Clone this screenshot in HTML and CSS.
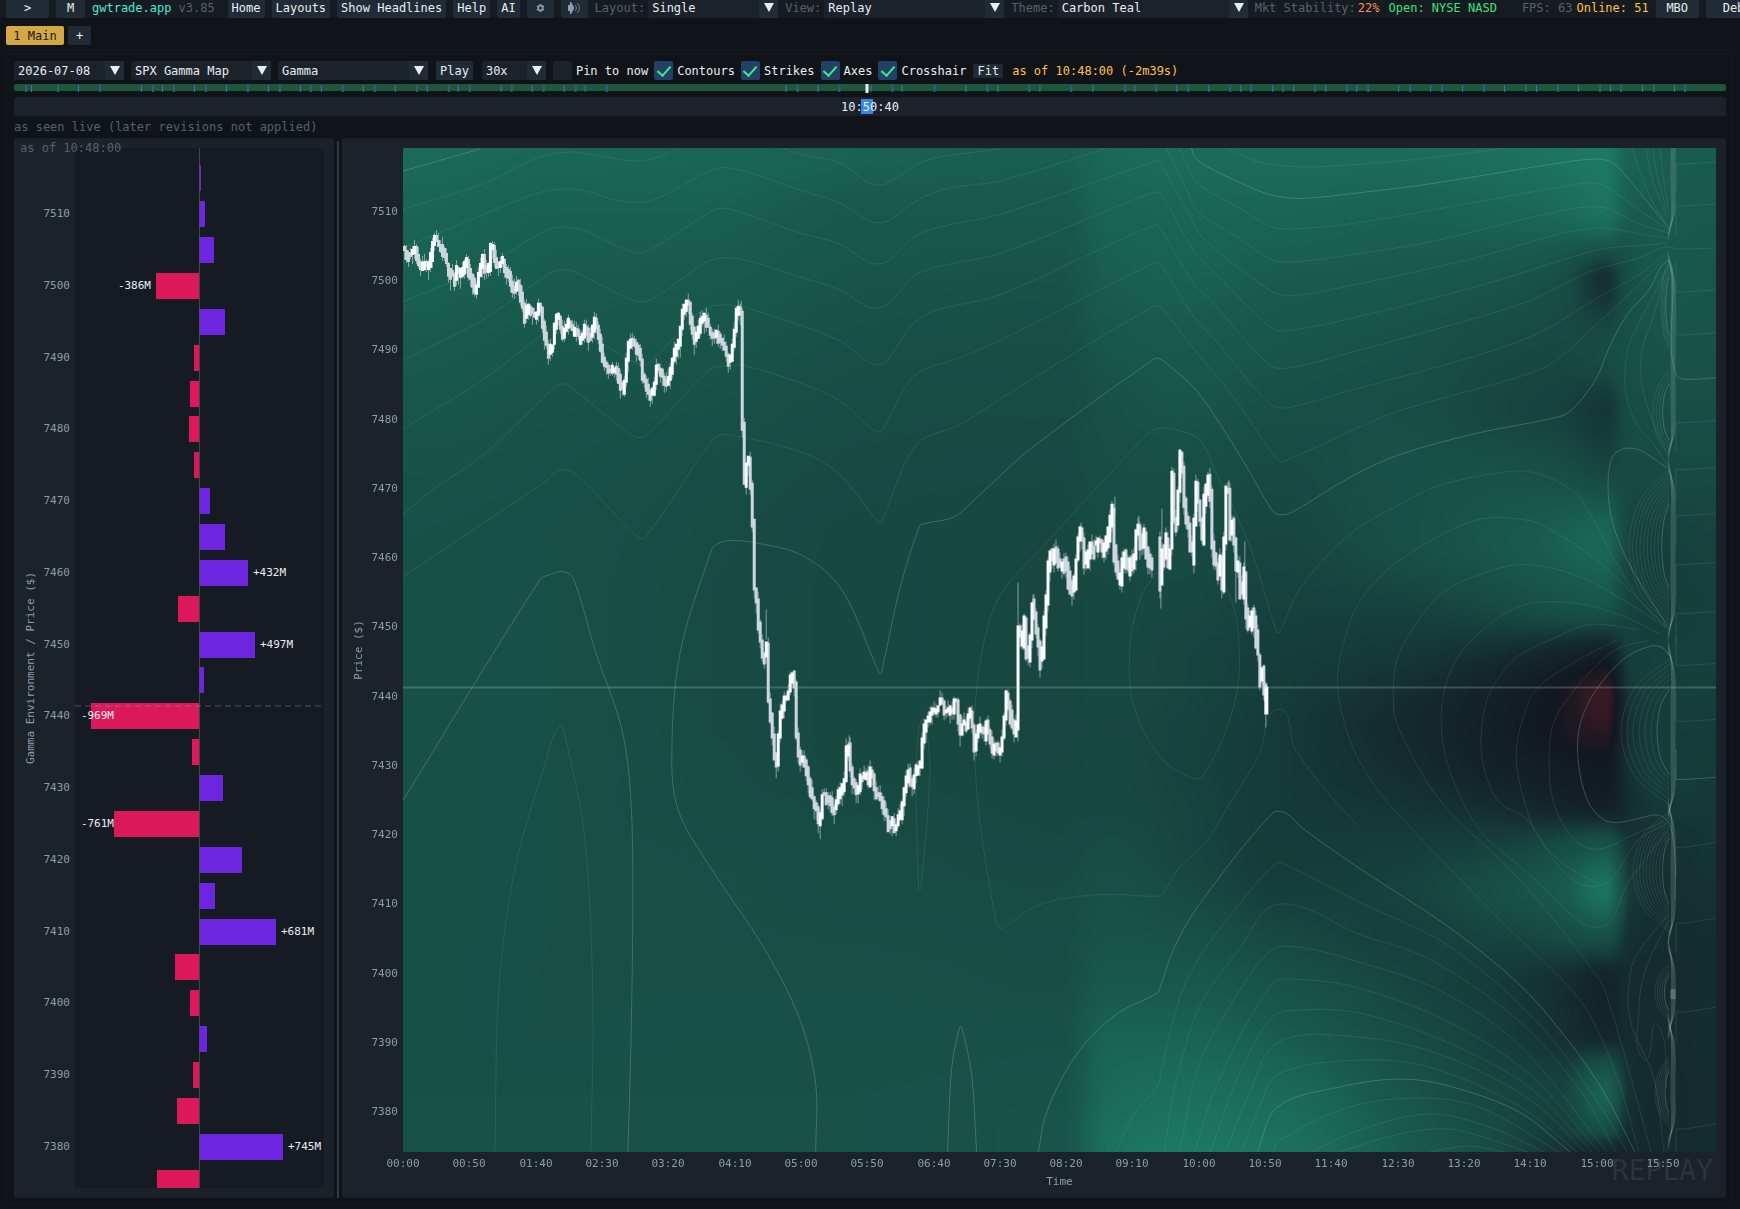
FILE: index.html
```html
<!DOCTYPE html>
<html lang="en">
<head>
<meta charset="utf-8">
<title>gwtrade.app</title>
<link rel="stylesheet" href="styles.css">
</head>
<body>
<header class="topbar">
  <button class="btn btn-wide">&gt;</button>
  <button class="btn btn-mid">M</button>
  <span class="brand">gwtrade.app</span>
  <span class="dim version">v3.85</span>
  <nav class="menu">
    <button class="btn">Home</button>
    <button class="btn">Layouts</button>
    <button class="btn">Show Headlines</button>
    <button class="btn">Help</button>
    <button class="btn">AI</button>
    <button class="btn btn-icon" aria-label="Settings"><svg width="9" height="10" viewBox="0 0 9 10"><path d="M4.500 1v8M1 3l7 4M8 3L1 7" stroke="#8b9cab" stroke-width="2"/><circle cx="4.500" cy="5" r="2.300" fill="#212b35" stroke="#8b9cab" stroke-width="1.600"/></svg></button>
    <button class="btn btn-icon" aria-label="Sound"><svg width="14" height="14" viewBox="0 0 14 14"><path d="M1 4h2V1h1l3 5v2l-3 5H3v-3H1z" fill="#8b9cab"/><path d="M8.500 4q2 3 0 6M10.500 2q3.500 5 0 10" fill="none" stroke="#6e7f8d"/></svg></button>
  </nav>
  <span class="field"><label class="dim" for="layout">Layout:</label>
  <span class="combo w130"><select id="layout"><option>Single</option></select></span></span>
  <span class="field"><label class="dim" for="view">View:</label>
  <span class="combo w180"><select id="view"><option>Replay</option></select></span></span>
  <span class="field"><label class="dim" for="theme">Theme:</label>
  <span class="combo w190"><select id="theme"><option>Carbon Teal</option></select></span></span>
  <span class="status"><span class="dim">Mkt Stability:</span><span class="warn">22%</span></span>
  <span class="good">Open: NYSE NASD</span>
  <span class="fps"><span class="dim">FPS: 63</span><span class="amber">Online: 51</span></span>
  <button class="btn btn-wide">MBO</button>
  <button class="btn btn-debug">Debug</button>
</header>

<div class="tabs">
  <button class="btn tab-active">1 Main</button>
  <button class="btn tab-add">+</button>
</div>

<main class="workspace">
  <form class="toolbar">
    <span class="combo w110"><select aria-label="Date"><option>2026-07-08</option></select></span>
    <span class="combo w140"><select aria-label="Map"><option>SPX Gamma Map</option></select></span>
    <span class="combo w150"><select aria-label="Metric"><option>Gamma</option></select></span>
    <button type="button" class="btn">Play</button>
    <span class="combo w64"><select aria-label="Speed"><option>30x</option></select></span>
    <label class="check"><input type="checkbox">Pin to now</label>
    <label class="check"><input type="checkbox" checked>Contours</label>
    <label class="check"><input type="checkbox" checked>Strikes</label>
    <label class="check"><input type="checkbox" checked>Axes</label>
    <label class="check"><input type="checkbox" checked>Crosshair</label>
    <button type="button" class="btn btn-small">Fit</button>
    <span class="amber">as of 10:48:00 (-2m39s)</span>
  </form>

  <svg class="timeline" id="timeline" viewBox="0 0 1713 9" preserveAspectRatio="none"></svg>

  <div class="slider">
    <input type="range" min="0" max="1000" value="498" aria-label="Replay time">
    <output>10:50:40</output>
  </div>
  <p class="note">as seen live (later revisions not applied)</p>

  <div class="charts">
    <section class="panel strikes"><svg id="strikes"></svg></section>
    <div class="splitter"></div>
    <section class="panel map"><canvas id="heat"></canvas><svg id="map"></svg></section>
  </div>
</main>
<script src="app.js"></script>
</body>
</html>
```
FILE: styles.css
```css
* { box-sizing: border-box; }
body {
  margin: 0;
  min-height: 100vh;
  display: flex;
  flex-direction: column;
  overflow-x: hidden;
  background: #101418;
  color: #e8eef3;
  font: 12px/16px "DejaVu Sans Mono", "Liberation Mono", monospace;
}
button, select, input { font: inherit; color: inherit; margin: 0; }

.topbar {
  display: flex;
  align-items: center;
  gap: 7px;
  height: 18px;
  padding-left: 6px;
  padding-bottom: 2px;
  background: #161b22;
  white-space: nowrap;
  overflow: hidden;
}
.topbar > * { flex: none; }
.btn {
  height: 19px;
  padding: 0 4px;
  border: 0;
  border-radius: 2px;
  background: #212b35;
  text-align: center;
}
.btn svg { display: block; margin: auto; }
.btn-wide { width: 43px; }
.btn-mid { width: 29px; }
.btn-icon { width: 27px; padding: 0; }
.btn-debug { width: 70px; }
.btn-small { height: 14px; line-height: 14px; }
.brand { color: #4de8d4; }
.dim { color: #56626b; }
.good { color: #3ee07f; }
.warn { color: #ff8a65; }
.amber { color: #ffc04d; }
.version { padding-right: 6px; }
.menu { display: flex; gap: 7px; }
.field { display: flex; align-items: center; gap: 3px; }
.status { display: flex; gap: 2px; }
.good { padding-left: 2px; }
.fps { display: flex; gap: 4px; padding-left: 18px; }

.combo {
  position: relative;
  height: 19px;
  background: #1b222a;
  border-radius: 2px;
}
.topbar .btn, .topbar .combo { height: 20px; }
.combo select {
  width: 100%;
  height: 100%;
  padding: 0 20px 0 4px;
  border: 0;
  appearance: none;
  background: linear-gradient(#212b35, #212b35) right / 19px 100% no-repeat;
}
.combo::after {
  content: "";
  position: absolute;
  right: 4px;
  top: 5px;
  border: solid transparent;
  border-width: 9px 5px 0;
  border-top-color: #e8eef3;
  pointer-events: none;
}
.w64 { width: 64px; }
.w110 { width: 110px; }
.w130 { width: 130px; }
.w140 { width: 140px; }
.w150 { width: 150px; }
.w180 { width: 180px; }
.w190 { width: 190px; }
.toolbar .combo { margin-right: -1px; }
.toolbar .btn { margin: 0 1px; }

.tabs { display: flex; gap: 4px; padding: 8px 6px 4px; border-bottom: 1px solid #13191e; }
.tab-active { width: 58px; background: #d4a845; color: #14181c; }
.tab-add { width: 23px; }

.workspace {
  flex: 1;
  display: flex;
  flex-direction: column;
  margin: 3px 6px 4px;
  padding: 7px 7px 6px;
  border: 1px solid #14191e;
}
.toolbar { display: flex; align-items: center; gap: 8px; white-space: nowrap; }
.check { display: flex; align-items: center; gap: 4px; margin-right: -2px; }
.check input {
  appearance: none;
  display: grid;
  place-items: center;
  width: 19px;
  height: 19px;
  background: #1b222a;
  border-radius: 2px;
}
.check input:checked { background: #234166; }
.check input:checked::before {
  content: "";
  width: 6px;
  height: 11px;
  margin-bottom: 3px;
  border: solid #3bf07f;
  border-width: 0 2px 2px 0;
  transform: rotate(42deg);
}
.timeline { display: block; width: 100%; height: 9px; margin-top: 4px; }
.slider { display: grid; margin-top: 4px; height: 19px; background: #1b222a; border-radius: 2px; }
.slider > * { grid-area: 1 / 1; }
.slider input { appearance: none; width: 100%; height: 19px; background: none; }
.slider input::-webkit-slider-thumb { appearance: none; width: 12px; height: 15px; background: #3d85e0; }
.slider output { place-self: center; pointer-events: none; z-index: 1; }
.note { margin: 3px 0; color: #56626b; }

.charts { flex: 1; display: flex; min-height: 600px; }
.panel { position: relative; background: #1b222a; border-radius: 3px; }
.panel > svg { position: absolute; inset: 0; width: 100%; height: 100%; }
.panel canvas { position: absolute; }
.strikes { width: 320px; }
.splitter { width: 2px; margin: 3px 3px 0; background: #34383c; }
.map { flex: 1; }

.tick { fill: #8b9dab; font-size: 11px; }
.mark { fill: #e8eef3; font-size: 11px; }
.caption { fill: #56626b; font-size: 12px; }
.end { text-anchor: end; }
.mid { text-anchor: middle; }
.watermark { fill: #2c343e; font-size: 28px; text-anchor: end; }
.contour { fill: none; stroke: #9cb8ac; stroke-opacity: .15; }
.contour.major { stroke-opacity: .32; }
.contour.edge { stroke-opacity: .24; }
```
FILE: app.js
```js
const TOP = 7519.1, BOTTOM = 7374.1;

// ---- timeline -------------------------------------------------------------
const events = [11,17,43,64,85,127,138,148,159,180,191,212,233,254,265,286,296,307,328,349,360,381,402,413,434,444,455,487,497,518,529,550,561,571,592,772,783,804,825,857,878,888,920,952,973,984,1015,1026,1057,1079,1111,1121,1142,1163,1174,1195,1216,1227,1237,1259,1269,1280,1301,1312,1333,1343,1354,1385,1396,1417,1428,1449,1470,1491,1512,1523,1544,1565,1586,1597,1607,1629,1640,1661,1671];
document.getElementById('timeline').innerHTML =
  '<rect width="1713" height="7" rx="2" fill="#20563c"/>' +
  events.map((x, i) => `<rect x="${x}" y="1" width="${i % 2 ? 1 : 2}" height="7" fill="${i % 2 ? '#3d77b5' : '#2c6180'}"/>`).join('') +
  '<rect x="852" width="3" height="9" fill="#e8eef3"/>';

// ---- gamma by strike ------------------------------------------------------
const bars = [2,6,15,-43,26,-5,-9,-10,-5,11,26,49,-21,56,5,-108,-7,24,-85,43,16,77,-24,-9,8,-6,-22,84,-42];
const labels = {7500:'-386M',7460:'+432M',7450:'+497M',7440:'-969M',7425:'-761M',7410:'+681M',7380:'+745M'};

function drawStrikes() {
  const svg = document.getElementById('strikes');
  const w = svg.clientWidth, h = svg.clientHeight;
  const L = 61, R = w - 10, T = 10, B = h - 10, zero = 185;
  const y = p => T + (TOP - p) / (TOP - BOTTOM) * (B - T);
  let s = `<rect x="${L}" y="${T}" width="${R - L}" height="${B - T}" fill="#161a22"/>`;
  let marks = '';
  bars.forEach((v, i) => {
    const price = 7515 - i * 5;
    const y0 = Math.round(y(price) - 12), hh = Math.min(26, B - y0);
    const x0 = v < 0 ? zero + v : zero, ww = Math.abs(v);
    s += `<rect x="${x0}" y="${y0}" width="${ww}" height="${hh}" fill="${v < 0 ? '#db1859' : '#6d25e0'}"/>`;
    if (labels[price]) {
      const x = v < 0 ? Math.max(x0 - 5, 100) : Math.min(x0 + ww + 5, R - 36);
      marks += `<text class="mark ${v < 0 ? 'end' : ''}" x="${x}" y="${Math.round(y(price)) + 4}">${labels[price]}</text>`;
    }
  });
  s += `<rect x="${zero}" y="${T}" width="1" height="${B - T}" fill="#4a5058" fill-opacity=".8"/>`;
  const now = Math.round(y(7441.3));
  s += `<path d="M${L} ${now}H${R - 2}" stroke="#a5adb5" stroke-opacity=".2" stroke-width="2" stroke-dasharray="6 4"/>`;
  for (let p = 7510; p >= 7380; p -= 10) s += `<text class="tick end" x="56" y="${Math.round(y(p)) + 4}">${p}</text>`;
  s += `<text class="caption" x="6" y="14">as of 10:48:00</text>` + marks;
  s += `<text class="tick mid" transform="translate(20 ${h / 2}) rotate(-90)">Gamma Environment / Price ($)</text>`;
  svg.innerHTML = s;
}

// ---- gamma field ----------------------------------------------------------
const gx = [403,560,700,860,1060,1110,1180,1280,1400,1500,1560,1605,1632,1660,1717];
const gy = [148,210,280,350,410,470,540,600,660,700,725,765,800,850,890,935,985,1030,1095,1130,1153];
const field = [
  [8,7.6,7.4,7,6.6,7.8,8.2,8.2,8.2,8.8,9.2,9.6,7,6.5,6.3],
  [7.4,6.8,6.8,6,6,7.2,7.4,7.4,7,7.4,8,9,6.4,6.2,6],
  [6.8,6.3,6.1,5.4,5.2,6.5,6.8,6.3,6,5.5,4.6,2.4,4.8,5.8,5.6],
  [6.2,5.6,5.5,4.8,4.6,5.6,6,5.5,5,4.2,4,4.4,5,5.2,5.2],
  [5.6,5.2,5,4.4,4.3,4.9,5.4,4.8,4.6,3.8,3.5,2.8,4.4,4.6,4.6],
  [5.2,5,4.6,4.2,4.1,4.6,4.7,4.2,4.9,5,4.6,3.8,4.2,4.2,4.2],
  [5,4.8,4.4,4,3.9,4.3,4.2,3.8,4.8,5.8,6.8,7.6,3.6,3.4,3.6],
  [5,4.8,4.3,4,3.9,4,4,3.5,3.6,4.4,5.2,5.6,3.5,3.3,3.4],
  [5,4.8,4.3,4,3.9,4,3.7,3.2,2.8,2,1.2,.4,3.3,3.4,3.4],
  [5,4.8,4.3,4,3.9,4,3.7,3.1,2.2,.9,-.2,-1.8,2.8,3.2,3.3],
  [5,4.8,4.3,4,3.9,3.9,3.6,3,2,.8,-.2,-1.2,2.6,3.2,3.2],
  [5,4.8,4.4,4,3.9,4,3.6,3,2.2,1.1,.5,.2,2.6,3.2,3.1],
  [5,4.8,4.4,4.2,4,4,3.7,3,2.6,1.9,1.2,.7,2.3,3,2.9],
  [5,4.8,4.6,4.4,4.1,4.4,3.8,3.1,3.2,3.6,4.5,5.8,2.6,2.4,2.7],
  [5,4.8,4.7,4.4,4.3,4.9,4.2,3.3,3.5,4.8,6,9,3,2.3,2.5],
  [5,4.8,4.7,4.6,4.5,5.3,5,4,3.4,3.7,4.3,5,2.4,2.2,2.3],
  [5,4.8,4.8,4.8,4.6,6,6,5.2,3.8,3,2.3,1.4,2.1,2.1,2.2],
  [5,4.8,4.9,4.9,4.9,7,7,6.2,4.4,3.2,2.4,1.6,2.1,2.1,2.2],
  [5,5,5,5,5.2,8,8.6,8,5.6,3.8,3.6,7,2.4,2,2.2],
  [5,5,5,5,5.4,8.6,9.2,8.6,6.2,4.1,3.2,4.6,2.1,2,2.2],
  [5,5,5,5,5.4,8.8,9.6,8.9,6.4,4.2,2.6,1.8,1.8,2,2.2]
];
const ramp = [[-2,[62,26,36]],[0,[18,23,32]],[2,[20,42,45]],[4,[23,73,65]],[6,[24,89,76]],[8,[27,106,86]],[10,[28,124,100]]];

function color(v) {
  let i = 1;
  while (i < ramp.length - 1 && v > ramp[i][0]) i++;
  const [a, ca] = ramp[i - 1], [b, cb] = ramp[i];
  const t = Math.min(1, Math.max(0, (v - a) / (b - a)));
  return ca.map((c, k) => c + (cb[k] - c) * t);
}
function locate(g, v) {
  let i = 0;
  while (i < g.length - 2 && v > g[i + 1]) i++;
  return [i, (v - g[i]) / (g[i + 1] - g[i])];
}
// monotone cubic interpolation along one axis
function cubic(g, vals, i, t) {
  const slope = k => k < 0 || k > g.length - 2 ? 0 : (vals[k + 1] - vals[k]) / (g[k + 1] - g[k]);
  const m = k => { const a = slope(k - 1), b = slope(k); return a * b <= 0 ? 0 : 2 * a * b / (a + b); };
  const d = g[i + 1] - g[i], t2 = t * t, t3 = t2 * t;
  return (2*t3 - 3*t2 + 1) * vals[i] + (t3 - 2*t2 + t) * d * m(i) + (3*t2 - 2*t3) * vals[i + 1] + (t3 - t2) * d * m(i + 1);
}
function drawHeat(L, T, W, H) {
  const c = document.getElementById('heat');
  c.width = W; c.height = H;
  c.style.left = L + 'px';
  c.style.top = T + 'px';
  const ctx = c.getContext('2d'), img = ctx.createImageData(W, H);
  const cols = [...Array(W)].map((_, x) => {
    const [i, t] = locate(gx, 403 + x / W * 1314);
    return field.map(row => cubic(gx, row, i, t));
  });
  const rows = [...Array(H)].map((_, y) => locate(gy, 148 + y / H * 1005));
  for (let y = 0; y < H; y++) for (let x = 0; x < W; x++) {
    const rgb = color(cubic(gy, cols[x], rows[y][0], rows[y][1]));
    const o = (y * W + x) * 4;
    img.data[o] = rgb[0]; img.data[o + 1] = rgb[1]; img.data[o + 2] = rgb[2]; img.data[o + 3] = 255;
  }
  ctx.putImageData(img, 0, 0);
}

// contour lines; a leading * marks a major level
const contours = `
*403,171 480,149
403,209 483,184 537,158 570,152 600,156 633,161 660,157 677,148
782,148 800,154 840,163 868,182 880,185 890,182 920,163 940,157 1000,149
403,248 470,220 538,193 563,189 590,192 615,200 650,201 715,169 740,170 800,190 840,203 868,220 880,223 890,220 920,199 950,188 1000,181 1108,148
403,302 482,268 545,231 562,227 585,231 635,253 650,250 712,211 722,208 740,212 800,233 840,244 868,262 880,264 890,260 918,235 950,225 1002,214 1150,163 1158,161 1165,170 1195,225 1205,240 1270,290 1290,296 1350,286 1480,257 1560,234 1600,228 1620,230 1645,235 1668,238
403,360 483,320 550,273 563,270 575,272 620,295 640,302 655,298 705,263 722,258 745,260 800,277 840,290 868,307 880,308 890,303 920,273 1002,253 1155,192 1162,195 1195,252 1210,268 1272,328 1288,331 1350,319 1480,286 1580,255 1610,248 1650,245 1668,243
403,429 483,380 545,333 562,324 600,342 640,365 652,361 700,312 725,305 760,312 840,341 868,362 880,365 888,360 922,317 1000,295 1155,225 1162,230 1195,285 1210,299 1270,365 1290,368 1350,353 1470,320 1530,301 1590,272 1640,258 1665,247 1680,249 1717,248
403,515 433,490 485,454 555,387 562,384 570,387 630,434 641,438 650,433 710,370 728,366 745,366 800,383 840,401 873,430 880,432 885,427 915,376 960,358 1002,340 1155,263 1162,266 1195,318 1215,339 1270,404 1288,408 1350,391 1480,355 1540,333 1600,297 1640,275 1668,253
403,577 545,482 562,470 580,478 635,535 645,538 714,439 728,435 803,453 840,475 880,524 882,522 917,445 960,425 1020,387 1155,306 1162,308 1195,350 1230,392 1278,460 1284,462 1350,432 1400,411 1520,377 1555,362 1600,322 1640,285 1668,256
*816,1153 816,1085 800,1020 765,950 712,870 680,815 672,765 680,655 712,550 718,544 730,541 755,543 803,556 842,590 880,674 882,672 900,590 920,526 925,524 955,517 975,500 1030,450 1155,359 1162,360 1198,392 1240,455 1273,511 1280,515 1292,513 1350,478 1400,455 1480,433 1560,417 1575,408 1597,379 1610,348 1628,315 1650,290 1668,261 1674,275 1672,345 1676,372 1682,379 1717,378
403,691 403,691
*403,801 540,580 550,575 564,572 574,580 595,650 622,730 631,800 633,900 631,1050 628,1153
495,1153 499,990 515,870 545,765 560,726 566,740 585,840 593,1000 591,1153
*948,1153 952,1070 960,1028 962,1028 972,1075 977,1153
916,780 919,730 924,720 930,760 929,800 921,890 919,890 916,780
1360,828 1330,795 1296,750 1279,710 1260,755 1230,805 1205,845 1180,868 1165,892 1158,897 1110,895 1060,900 1030,910 1003,929 997,924 980,820 975,750 976,700 985,640 1001,595 1050,540 1130,453 1155,430 1175,430 1200,440 1215,470 1250,545 1277,632 1281,632 1300,590 1350,535 1400,505 1440,486 1500,473 1535,473 1575,492 1590,513 1615,559 1640,600 1668,628
1165,565 1145,590 1133,628 1130,660 1132,697 1146,735 1166,763 1191,778 1202,778 1225,735 1238,690 1240,655 1235,610 1215,560
1652,1153 1635,1090 1612,1010 1600,980 1520,880 1440,800 1398,725 1394,695 1397,662 1408,638 1440,596 1480,575 1525,565 1580,577 1640,610 1668,629
1640,1153 1615,1070 1580,1000 1500,920 1390,805 1362,765 1347,730 1338,680 1350,625 1365,595 1400,561 1475,521 1530,521 1560,535 1597,560 1640,600 1668,628
1668,832 1650,855 1628,885 1613,920 1600,928 1580,922 1530,875 1480,830 1450,770 1442,720 1450,675 1473,640 1520,607 1570,603 1620,615 1660,634
1668,824 1640,840 1612,880 1597,887 1580,884 1560,868 1528,820 1500,803 1485,770 1482,735 1490,695 1515,660 1552,640 1590,625 1640,630
1665,822 1633,836 1598,850 1575,840 1555,805 1550,763 1555,722 1580,685 1617,650 1650,641
1600,885 1565,865 1538,836 1522,790 1517,755 1522,725 1537,690 1580,660 1617,641
*1676,900 1676,860 1671,826 1660,816 1640,819 1620,823 1604,820 1588,800 1579,760 1581,725 1596,692 1624,660 1650,647 1663,648 1672,658
*1039,1153 1045,1120 1062,1080 1085,1045 1120,1013 1158,994 1161,987 1175,948 1200,905 1273,814 1287,814 1302,828 1360,869 1450,928 1520,985 1560,1030 1600,1085 1636,1153
1116,1153 1135,1115 1158,1087 1162,1070 1180,1000 1200,958 1240,905 1276,864 1284,864 1360,903 1450,947 1540,1025 1600,1105 1628,1153
1165,1153 1175,1090 1200,1008 1240,950 1279,905 1360,935 1430,960 1520,1022 1580,1090 1617,1153
1180,1153 1200,1065 1240,992 1272,951 1300,948 1360,963 1440,991 1520,1046 1608,1153
1195,1153 1220,1080 1273,985 1298,980 1360,989 1450,1023 1530,1075 1600,1153
1211,1153 1240,1075 1273,1018 1300,1011 1360,1014 1450,1044 1530,1088 1593,1153
1226,1153 1250,1095 1279,1043 1360,1038 1440,1055 1530,1100 1586,1153
1242,1153 1260,1108 1279,1075 1360,1061 1430,1068 1520,1107 1578,1153
*1258,1153 1278,1108 1340,1088 1400,1080 1450,1087 1520,1113 1571,1153
1274,1153 1279,1142 1350,1108 1420,1099 1480,1108 1560,1153
1312,1153 1360,1131 1430,1115 1490,1128 1545,1153
1340,1153 1400,1135 1450,1130 1490,1140 1528,1153
1430,1153 1470,1147 1505,1153
*1192,148 1196,158 1210,168 1235,180 1265,193 1290,198 1310,198 1350,194 1430,184 1560,163 1596,159 1610,161 1620,168 1628,177 1650,204 1668,226
1180,148 1190,170 1200,185 1240,208 1270,226 1290,229 1350,224 1450,207 1580,184 1600,184 1620,195 1644,213 1670,230
1167,148 1185,185 1200,213 1240,238 1273,260 1295,262 1350,255 1430,242 1560,211 1590,207 1610,209 1640,224 1670,233
1226,148 1260,162 1305,167 1350,165 1430,158 1506,148
1633,148 1643,177 1655,205 1668,224
1647,148 1652,175 1668,218
1654,148 1658,175 1668,212
1661,148 1664,175 1669,208
*1668,468 1650,456 1640,450 1625,449 1613,458 1609,490 1614,525 1627,558 1645,590 1668,626
1668,465 1655,445 1638,425 1627,395 1626,370 1630,345 1644,315 1660,285 1668,265
1668,454 1655,425 1643,385 1643,350 1655,315 1666,270
1668,1090 1658,1025 1645,1060 1640,1010 1645,975 1660,940 1671,920
1665,1153 1655,1080 1631,1020 1632,970 1645,945 1670,915`.trim().split('\n').map(l => {
  const major = l[0] === '*';
  return { major, pts: l.replace('*', '').split(' ').map(p => p.split(',').map(Number)) };
});

// nested expiry lobes: top, bottom, reach, count
const lobes = [[262,350,8,4],[370,455,16,4],[470,624,40,10],[660,805,48,7],[812,932,36,10],[965,1022,14,5],[1058,1128,14,6]];

function smooth(p) {
  let d = `M${p[0]}`;
  for (let i = 0; i < p.length - 1; i++) {
    const a = p[i - 1] || p[i], b = p[i], c = p[i + 1], e = p[i + 2] || c;
    const len = Math.hypot(c[0] - b[0], c[1] - b[1]);
    const l0 = Math.hypot(c[0] - a[0], c[1] - a[1]) || 1, l1 = Math.hypot(e[0] - b[0], e[1] - b[1]) || 1;
    const k = len * .33;
    d += `C${b[0] + (c[0] - a[0]) / l0 * k} ${b[1] + (c[1] - a[1]) / l0 * k} ${c[0] - (e[0] - b[0]) / l1 * k} ${c[1] - (e[1] - b[1]) / l1 * k} ${c[0]} ${c[1]}`;
  }
  return d;
}
function drawContours() {
  let s = contours.map(c => `<path class="contour${c.major ? ' major' : ''}" d="${smooth(c.pts)}"/>`).join('');
  for (const [t, b, r, n] of lobes) {
    for (let i = 0; i < n; i++) {
      const f = 1 - i / (n + 1), m = (t + b) / 2, hh = (b - t) / 2 * (.45 + .55 * f);
      s += `<path class="contour${i === n - 1 ? ' major' : ''}" d="${smooth([[1670, m - hh], [1670 - r * f * .7, m - hh * .62], [1670 - r * f, m], [1670 - r * f * .7, m + hh * .62], [1670, m + hh]])}"/>`;
    }
  }
  for (const [t, b] of [[100,240],[252,460],[460,640],[642,820],[800,945],[940,1040],[1015,1150]]) {
    for (let i = 0; i < 5; i++) s += `<path class="contour edge" d="M1669 ${t + i * 3}Q${1674 + i} ${t + 22} ${1672 + i} ${t + 60}V${b - 50}Q${1674 + i} ${b - 20} 1669 ${b - i * 3}"/>`;
  }
  for (const y of [164,206,292,335,423,470,516,565,614,666,722,780,848,924,1013,1130])
    s += `<path class="contour${y === 780 ? ' major' : ''}" d="M1677 ${y > 290 && y < 350 || y > 660 && y < 790 ? y - 30 : y + 30}V${y}Q1679 ${y} 1686 ${y}L1717 ${y - (y > 840 ? 5 : 2)}"/>`;
  return s;
}

// ---- price ----------------------------------------------------------------
const price = `403,250 408,256 412,255 414,247 416,250 418,262 421,269 424,262 427,266 430,264 432,248 434,240 436,238 438,245 442,248 444,252 447,265 450,272 453,277 455,281 457,269 460,274 463,270 467,261 469,272 472,278 474,285 476,293 478,280 480,271 483,258 486,273 489,266 490,248 493,248 496,264 500,266 503,260 506,276 508,268 511,284 514,290 518,282 520,290 522,299 525,317 528,305 531,312 535,315 538,313 540,300 542,318 545,335 547,345 549,350 553,345 555,325 558,312 561,328 563,334 566,327 569,323 573,330 576,330 580,342 583,335 586,326 590,340 592,337 594,318 597,328 600,340 603,360 607,368 611,372 615,368 618,372 620,383 624,395 626,370 629,345 632,340 636,346 640,352 643,376 647,388 652,398 655,385 657,368 661,372 664,380 667,385 670,375 674,356 678,345 680,335 683,312 687,303 689,305 692,325 695,342 698,332 702,316 706,318 709,328 712,335 717,333 722,342 726,352 730,365 732,350 735,330 737,312 740,308 742,320 743,425 744,490 746,480 748,450 750,470 752,500 753,520 754,585 756,595 758,610 760,640 762,645 764,665 766,650 768,640 769,700 771,715 773,735 775,755 777,762 779,735 781,715 784,705 786,690 788,705 790,680 793,675 795,685 796,720 798,750 801,760 804,757 806,765 809,780 812,795 815,805 818,810 820,830 822,800 824,792 827,800 830,798 833,808 836,810 839,795 842,790 845,780 847,750 849,745 850,760 852,780 855,785 858,800 860,780 862,775 864,785 866,770 869,785 872,765 874,790 877,795 880,797 883,805 885,812 888,820 890,830 893,820 896,833 898,820 901,815 904,795 907,780 909,770 912,788 915,775 918,765 921,765 923,740 926,725 930,715 934,712 938,708 942,698 945,715 949,710 953,710 956,697 958,710 961,735 964,720 967,730 970,710 972,715 975,750 978,730 982,728 985,735 987,722 990,735 993,752 996,742 999,750 1002,750 1004,725 1006,710 1007,697 1010,705 1012,725 1015,730 1017,725 1018,635 1020,630 1022,645 1025,620 1028,665 1031,640 1033,605 1036,625 1039,645 1042,668 1044,630 1047,600 1048,575 1050,555 1053,555 1056,550 1060,570 1063,563 1067,563 1070,585 1074,590 1077,562 1080,535 1082,530 1085,560 1088,560 1091,545 1095,550 1098,545 1101,545 1105,545 1108,540 1110,525 1113,510 1115,550 1118,570 1120,590 1123,560 1126,550 1128,572 1131,560 1134,575 1136,537 1139,528 1142,548 1145,535 1148,560 1152,563|1159,540 1161,582 1163,550 1165,560 1167,540 1170,568 1172,530 1173,475 1175,520 1177,525 1179,495 1181,457 1184,475 1186,530 1188,515 1190,545 1193,555 1195,520 1197,485 1200,510 1203,538 1205,500 1208,480 1210,475 1212,510 1214,575 1216,540 1218,590 1221,560 1223,590 1225,540 1226,490 1229,490 1231,530 1234,515 1236,570 1239,565 1242,600 1245,575 1247,615 1250,635 1252,610 1255,620 1258,645 1261,680 1263,670 1265,690 1266,700`
  .split('|').map(run => run.split(' ').map(p => p.split(',').map(Number)));
const wickPoints = [[484,256,260],[688,294,303],[738,300,310],[741,301,310],[766,610,640],[849,736,745],[1018,583,630],[1033,595,605],[1081,523,530],[1115,497,515],[1139,516,528],[1162,509,540],[1161,582,609],[1210,468,475],[1229,480,490],[1236,570,603],[1245,542,570],[820,830,840]];

function drawPrice() {
  let seed = 7;
  const rnd = () => (seed = seed * 16807 % 2147483647) / 2147483647;
  let wicks = '', down = '', up = '';
  for (const run of price) {
    const xs = run.map(p => p[0]), ys = run.map(p => p[1]);
    const at = x => { const [i, t] = locate(xs, x); return ys[i] + (ys[i + 1] - ys[i]) * Math.min(1, t); };
    for (let x = xs[0]; x < xs[xs.length - 1]; x += 2) {
      const a = at(x), b = at(x + 2) + (rnd() - .5) * 4;
      const choppy = x > 1000 ? 2 : 1;
      const t = Math.min(a, b) - 1 - rnd() * 3 * choppy, h = Math.abs(b - a) + 3 + rnd() * 6 * choppy;
      const r = `M${x} ${Math.round(t)}h3v${Math.round(h)}h-3z`;
      if (b < a) up += r; else down += r;
      wicks += `M${x + 1} ${Math.round(t - rnd() * 7)}h1v${Math.round(h + 4 + rnd() * 8)}h-1z`;
    }
  }
  wicks += wickPoints.map(([x, t, b]) => `M${x} ${t}h1v${b - t}h-1z`).join('') + 'M1266 715h1v13h-1z';
  return `<path d="${wicks}" fill="#cfdbe0" fill-opacity=".6"/><path d="${down}" fill="#ced7e1"/><path d="${up}M1265 687h4v28h-4z" fill="#f8fbff"/>`;
}

function drawMap() {
  const svg = document.getElementById('map');
  const w = svg.clientWidth, h = svg.clientHeight;
  const L = 61, T = 10, W = w - 71, H = h - 56;
  drawHeat(L, T, Math.round(W), Math.round(H));
  const y = p => T + (TOP - p) / (TOP - BOTTOM) * H;
  let s = `<clipPath id="area"><rect x="${L}" y="${T}" width="${W}" height="${H}"/></clipPath>`;
  s += `<g clip-path="url(#area)"><g transform="translate(${L} ${T}) scale(${W / 1314} ${H / 1005}) translate(-403 -148)">`;
  s += drawContours() + drawPrice() + '<path d="M403 688H1717" stroke="#b9d3c8" stroke-opacity=".25" stroke-width="2"/></g></g>';
  s += `<text class="watermark" x="${w - 13}" y="${h - 18}">REPLAY</text>`;
  for (let p = 7510; p >= 7380; p -= 10) s += `<text class="tick end" x="56" y="${Math.round(y(p)) + 4}">${p}</text>`;
  for (let i = 0; i < 20; i++) {
    const m = i * 50, t = String(Math.floor(m / 60)).padStart(2, '0') + ':' + String(m % 60).padStart(2, '0');
    s += `<text class="tick mid" x="${Math.round(L + i * W / 19.8)}" y="${h - 31}">${t}</text>`;
  }
  s += `<text class="tick mid" x="${L + W / 2}" y="${h - 13}">Time</text>`;
  s += `<text class="tick mid" transform="translate(20 ${T + H / 2}) rotate(-90)">Price ($)</text>`;
  svg.innerHTML = s;
}
function draw() { drawStrikes(); drawMap(); }
addEventListener('resize', draw);
draw();
```
